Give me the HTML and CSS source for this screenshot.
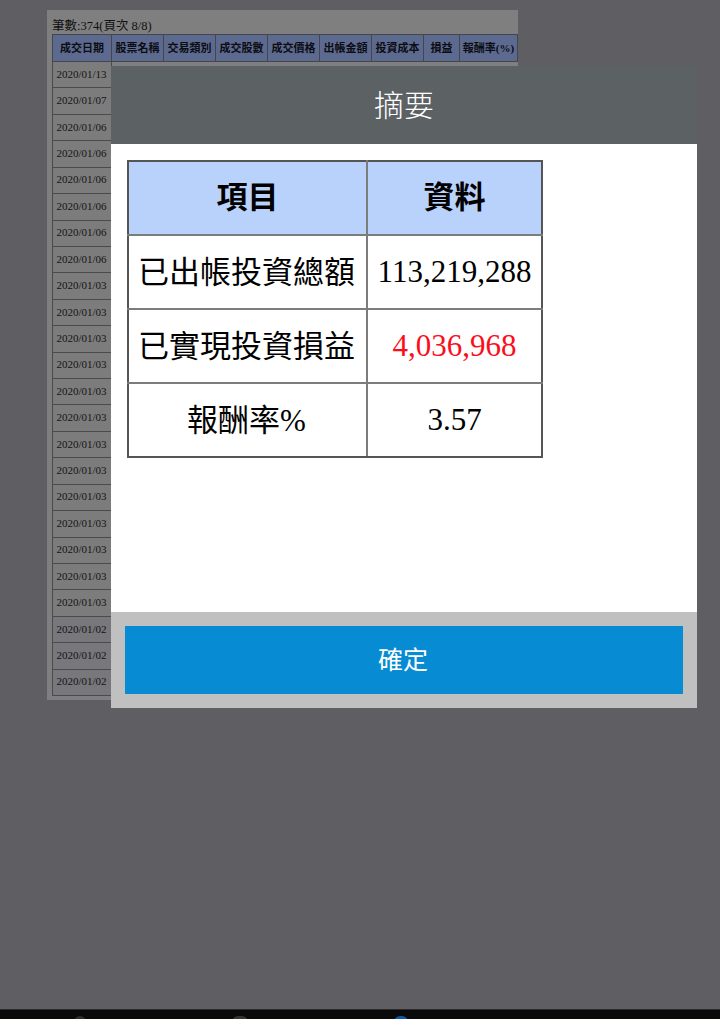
FILE: index.html
```html
<!DOCTYPE html>
<html lang="zh-Hant">
<head>
<meta charset="utf-8">
<title>摘要</title>
<link rel="stylesheet" href="styles.css">
</head>
<body>
<main class="page">
  <section class="panel">
    <div class="caption">筆數:374(頁次 8/8)</div>
    <table class="trades">
      <thead>
        <tr><th class="c-date">成交日期</th><th class="c-n">股票名稱</th><th class="c-n">交易類別</th><th class="c-n">成交股數</th><th class="c-n">成交價格</th><th class="c-n">出帳金額</th><th class="c-n">投資成本</th><th class="c-pl">損益</th><th class="c-r">報酬率(%)</th></tr>
      </thead>
      <tbody>
        <tr><td>2020/01/13</td></tr>
        <tr><td>2020/01/07</td></tr>
        <tr><td>2020/01/06</td></tr>
        <tr><td>2020/01/06</td></tr>
        <tr><td>2020/01/06</td></tr>
        <tr><td>2020/01/06</td></tr>
        <tr><td>2020/01/06</td></tr>
        <tr><td>2020/01/06</td></tr>
        <tr><td>2020/01/03</td></tr>
        <tr><td>2020/01/03</td></tr>
        <tr><td>2020/01/03</td></tr>
        <tr><td>2020/01/03</td></tr>
        <tr><td>2020/01/03</td></tr>
        <tr><td>2020/01/03</td></tr>
        <tr><td>2020/01/03</td></tr>
        <tr><td>2020/01/03</td></tr>
        <tr><td>2020/01/03</td></tr>
        <tr><td>2020/01/03</td></tr>
        <tr><td>2020/01/03</td></tr>
        <tr><td>2020/01/03</td></tr>
        <tr><td>2020/01/03</td></tr>
        <tr><td>2020/01/02</td></tr>
        <tr><td>2020/01/02</td></tr>
        <tr><td>2020/01/02</td></tr>
      </tbody>
    </table>
  </section>
</main>
<footer class="navbar">
  <span class="nav-glow nav-a"></span>
  <span class="nav-glow nav-b"></span>
  <span class="nav-glow nav-c"></span>
</footer>
<div class="modal">
  <header class="modal-head">摘要</header>
  <div class="modal-body">
    <table class="summary">
      <thead>
        <tr><th class="col-a">項目</th><th class="col-b">資料</th></tr>
      </thead>
      <tbody>
        <tr><td class="label">已出帳投資總額</td><td>113,219,288</td></tr>
        <tr><td class="label">已實現投資損益</td><td class="gain">4,036,968</td></tr>
        <tr><td class="label">報酬率%</td><td>3.57</td></tr>
      </tbody>
    </table>
  </div>
  <div class="modal-foot">
    <button class="ok" type="button">確定</button>
  </div>
</div>
</body>
</html>
```
FILE: styles.css
```css
* { box-sizing: border-box; }
html, body { margin: 0; height: 1019px; overflow: hidden; }
body {
  display: flex;
  flex-direction: column;
  background: #5f5e63;
  font-family: "Liberation Serif", "Noto Sans CJK TC", serif;
  color: #000;
}
.page { flex: 1; padding: 10px 0 0 47px; }
.panel {
  width: 471px;
  height: 690px;
  background: #7f7f7f;
  padding: 8px 0 0 5px;
}
.caption {
  height: 16px;
  font-size: 12.5px;
  line-height: 16px;
  color: #111;
}
.trades {
  border-collapse: collapse;
  table-layout: fixed;
  width: 465px;
  color: #141414;
}
.trades th {
  height: 27px;
  padding: 0 0 3px;
  background: #5d6a90;
  border: 1px solid #45464c;
  font-size: 11px;
  font-weight: bold;
  color: #0c0d12;
  text-align: center;
  white-space: nowrap;
}
.c-date { width: 59px; }
.c-n { width: 52px; }
.c-pl { width: 36px; }
.c-r { width: 58px; }
.trades td {
  height: 26.43px;
  padding: 0 1px 2px 0;
  border: 1px solid #4b4b4d;
  background: #7c7c7d;
  font-size: 11px;
  text-align: center;
  white-space: nowrap;
}
.trades tr:nth-child(n+22) td { background: #77777c; }
.navbar {
  flex: none;
  height: 10px;
  background: #0a0a0a;
  border-top: 1px solid #2b2a30;
  overflow: hidden;
  display: flex;
  padding-left: 74px;
}
.nav-glow {
  width: 12px;
  height: 12px;
  margin-top: 6px;
  border-radius: 6px;
  flex: none;
}
.nav-a { background: #2e2e2e; }
.nav-b { width: 16px; margin-left: 146px; background: #333; }
.nav-c { width: 14px; margin-left: 146px; background: #0b56a6; }

.modal {
  position: absolute;
  left: 111px;
  top: 66px;
  width: 586px;
  height: 642px;
  display: flex;
  flex-direction: column;
}
.modal-head {
  height: 78px;
  padding-bottom: 4px;
  background: #5c6164;
  color: #fff;
  font-size: 30px;
  font-family: "Noto Sans CJK TC", sans-serif;
  font-weight: 300;
  line-height: 74px;
  text-align: center;
}
.modal-body {
  flex: 1;
  background: #fff;
  padding: 16px;
}
.summary {
  border-collapse: collapse;
  table-layout: fixed;
  width: 414px;
  font-size: 31px;
}
.summary th, .summary td {
  padding: 0;
  border: 2px solid #7c7c7c;
  text-align: center;
  height: 74px;
  white-space: nowrap;
}
.summary tr > :first-child { border-left-color: #555; }
.summary tr > :last-child { border-right-color: #555; }
.summary th { border-top-color: #555; }
.summary tbody tr:last-child td { border-bottom-color: #555; }
.summary th {
  padding-bottom: 8px;
  background: #b9d2fb;
  font-weight: bold;
}
.summary .label { padding: 0 2px 6px 0; }
.col-a { width: 239px; }
.col-b { width: 175px; }
.gain { color: #fc0d1b; }
.modal-foot {
  height: 96px;
  background: #c0c0c0;
  padding: 14px;
}
.ok {
  display: block;
  width: 100%;
  height: 68px;
  border: 0;
  padding: 0 2px 4px 0;
  background: #078bd2;
  color: #fff;
  font-family: "Noto Sans CJK TC", sans-serif;
  font-size: 25px;
}
```
